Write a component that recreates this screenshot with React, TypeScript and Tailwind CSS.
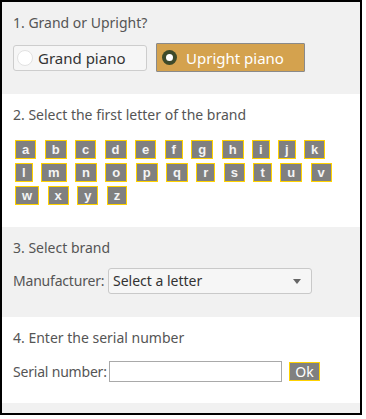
import React from "react";

const row1 = ["a","b","c","d","e","f","g","h","i","j","k","l","m","n","o","p","q","r","s","t","u","v","w","x","y","z"];

export default function App() {
  return (
    <div className="w-[362px] h-[415px] border-2 border-black bg-white flex flex-col text-[14px] text-[#555]" style={{ fontFamily: '"Noto Sans", sans-serif' }}>
      {/* Section 1 */}
      <div className="h-[92px] bg-[#f1f1f1] pl-[11px] pt-[11px] flex flex-col">
        <div className="leading-[20px]">1. Grand or Upright?</div>
        <div className="mt-[10px] h-[29px] flex items-center">
          <div className="w-[134px] h-[26px] border border-[#cdcdcd] rounded-[3px] bg-[#f6f6f6] flex items-center pl-[3px]">
            <span className="w-[16px] h-[16px] rounded-full bg-white border border-[#e2e2e2]" />
            <span className="ml-[5px] text-[15px] text-[#333] leading-[20px]">Grand piano</span>
          </div>
          <div className="ml-[9px] w-[149px] h-[29px] border border-[#8a8a8a] rounded-[1px] bg-[#d4a24e] flex items-center pl-[5px]">
            <span className="w-[15px] h-[15px] rounded-full bg-[#3d4a2a] flex items-center justify-center">
              <span className="w-[7px] h-[7px] rounded-full bg-white" />
            </span>
            <span className="ml-[9px] text-[15px] text-white leading-[20px]">Upright piano</span>
          </div>
        </div>
      </div>
      {/* Section 2 */}
      <div className="h-[133px] bg-white pt-[11px] flex flex-col">
        <div className="pl-[11px] leading-[20px]">2. Select the first letter of the brand</div>
        <div className="mt-[15px] pl-[13px] pr-[14px] flex flex-wrap gap-x-[8.4px] gap-y-[4px]">
          {row1.map((l) => (
            <span
              key={l}
              className="h-[19px] px-[6px] border border-[#ffd200] bg-[#808080] text-[#f4f4f4] font-bold text-[13px] leading-[17px] flex items-center justify-center"
              style={{ fontFamily: '"Liberation Sans", Arial, sans-serif' }}
            >
              {l}
            </span>
          ))}
        </div>
      </div>
      {/* Section 3 */}
      <div className="h-[90px] bg-[#f1f1f1] pl-[11px] pt-[11px] flex flex-col">
        <div className="leading-[20px]">3. Select brand</div>
        <div className="mt-[10px] flex items-center">
          <span className="leading-[20px] w-[95px] shrink-0 whitespace-nowrap tracking-[-0.2px]">Manufacturer:</span>
          <div className="w-[204px] h-[26px] border border-[#c9c9c9] rounded-[3px] bg-[#f6f6f6] flex items-center pl-[4px] pr-[10px]">
            <span className="flex-1 text-[#333] leading-[20px]">Select a letter</span>
            <svg width="8" height="5" viewBox="0 0 8 5"><path d="M0 0 L8 0 L4 5 Z" fill="#666" /></svg>
          </div>
        </div>
      </div>
      {/* Section 4 */}
      <div className="h-[86px] bg-white pl-[11px] pt-[11px] flex flex-col">
        <div className="leading-[20px]">4. Enter the serial number</div>
        <div className="mt-[13px] flex items-center h-[21px]">
          <span className="leading-[20px] w-[96px] shrink-0 whitespace-nowrap tracking-[-0.2px]">Serial number:</span>
          <div className="w-[173px] h-[21px] shrink-0 border border-[#a9a9a9] bg-white" />
          <span className="ml-[7px] w-[31px] h-[19px] shrink-0 border border-[#ffd200] bg-[#808080] text-white text-[14px] leading-[17px] flex items-center justify-center">Ok</span>
        </div>
      </div>
      <div className="flex-1 bg-[#f1f1f1]" />
    </div>
  );
}
